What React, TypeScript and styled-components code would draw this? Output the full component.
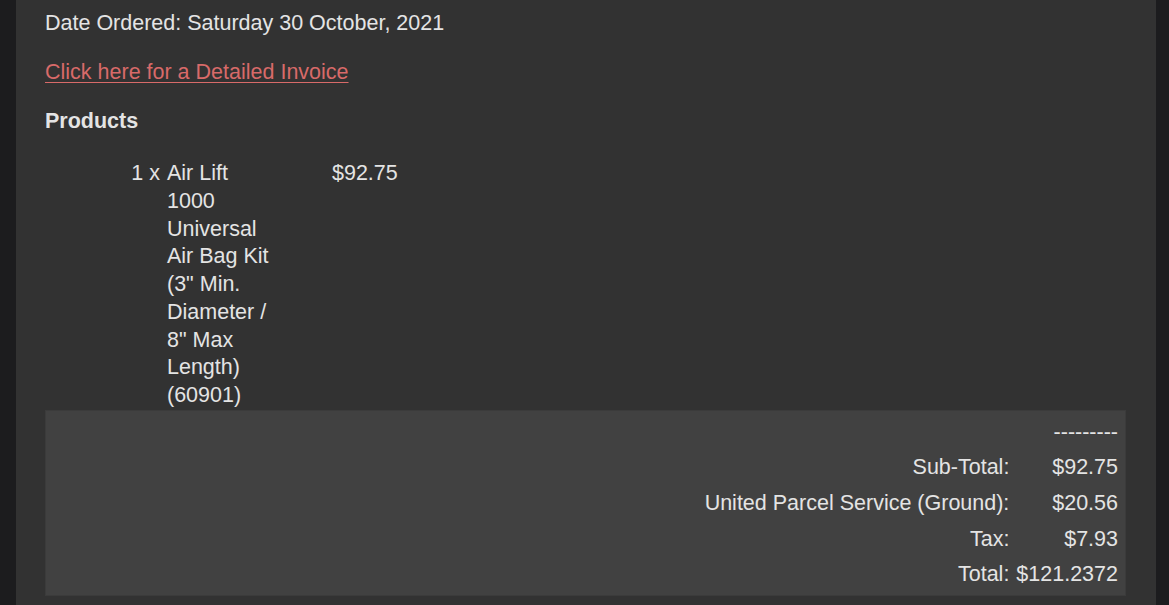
import { Fragment } from 'react';
import { createGlobalStyle } from 'styled-components';
import styled from 'styled-components';

const GlobalStyle = createGlobalStyle`
  html, body {
    margin: 0;
    padding: 0;
    background-color: #1c1c1e;
  }
  body {
    font-family: 'Liberation Sans', Arial, Helvetica, sans-serif;
    color: #e4e4e4;
  }
`;

const lines = [
  { label: '', value: '---------' },
  { label: 'Sub-Total:', value: '$92.75' },
  { label: 'United Parcel Service (Ground):', value: '$20.56' },
  { label: 'Tax:', value: '$7.93' },
  { label: 'Total:', value: '$121.2372' },
];

const App = () => {
  return (
    <>
      <GlobalStyle />
      <Page>
        <Panel>
          <Line>Date Ordered: Saturday 30 October, 2021</Line>
          <InvoiceLink href="#">Click here for a Detailed Invoice</InvoiceLink>
          <Heading>Products</Heading>
          <ProductTable>
            <Qty>1&nbsp;x</Qty>
            <ProductName>
              Air Lift 1000 Universal Air Bag Kit (3" Min. Diameter / 8" Max
              Length) (60901)
            </ProductName>
            <Price>$92.75</Price>
          </ProductTable>
          <TotalsBox>
            {lines.map((line, idx) => (
              <Fragment key={idx}>
                <TotalsCell>{line.label}</TotalsCell>
                <TotalsCell>{line.value}</TotalsCell>
              </Fragment>
            ))}
          </TotalsBox>
        </Panel>
      </Page>
    </>
  );
};

export default App;

const Page = styled.div`
  display: flex;
  padding-left: 16px;
  padding-right: 13px;
  min-height: 605px;
  box-sizing: border-box;
`;

const Panel = styled.div`
  display: flex;
  flex-direction: column;
  align-items: flex-start;
  flex: 1;
  background-color: #323232;
  padding: 11px 30px 9px 29px;
  font-size: 21.5px;
`;

const Line = styled.div`
  line-height: 24px;
`;

const InvoiceLink = styled.a`
  margin-top: 25px;
  line-height: 24px;
  color: #d86a69;
  text-decoration: underline;
  text-decoration-thickness: 1px;
  text-underline-offset: 3px;
`;

const Heading = styled.div`
  margin-top: 25px;
  line-height: 24px;
  font-weight: bold;
`;

const ProductTable = styled.div`
  display: grid;
  grid-template-columns: 115px 108px auto;
  column-gap: 7px;
  margin-top: 27px;
  line-height: 27.75px;
`;

const Qty = styled.div`
  text-align: right;
`;

const ProductName = styled.div``;

const Price = styled.div`
  padding-left: 50px;
`;

const TotalsBox = styled.div`
  align-self: stretch;
  display: grid;
  grid-template-columns: 1fr auto;
  grid-auto-rows: 35.6px;
  column-gap: 7px;
  justify-items: end;
  align-items: center;
  padding: 4px 7px 2px 8px;
  background-color: #414141;
  border: 1px solid #3b3b3b;
`;

const TotalsCell = styled.span`
  line-height: 35.6px;
`;
